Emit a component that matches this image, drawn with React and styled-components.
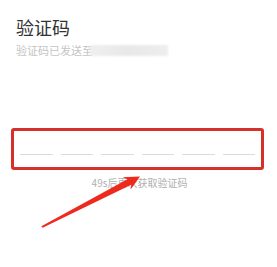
import React from "react";
import styled, { createGlobalStyle } from "styled-components";

const Global = createGlobalStyle`
  html, body { margin: 0; padding: 0; background: #fff; }
  body { font-family: "Noto Sans CJK SC", "Noto Sans", sans-serif; }
`;

const Page = styled.div`
  position: relative;
  width: 277px;
  height: 267px;
  overflow: hidden;
  background: #fff;
`;

const Header = styled.div`
  padding: 15px 0 0 16px;
  display: flex;
  flex-direction: column;
  gap: 3px;
`;

const Title = styled.div`
  font-size: 18px;
  line-height: 24px;
  color: #333;
`;

const Sub = styled.div`
  display: flex;
  align-items: center;
  font-size: 11px;
  line-height: 16px;
  color: #c4c4c4;
`;

const Masked = styled.span`
  display: inline-block;
  width: 78px;
  height: 11px;
  margin-left: -3px;
  background: linear-gradient(90deg, #efefef, #e8e8e8 50%, #eeeeee);
  filter: blur(0.8px);
`;

const Frame = styled.div`
  margin: 70px 13px 0 11px;
  border: 3px solid #d5302a;
  border-radius: 3px;
  padding: 23px 6px 12px 6px;
`;

const Dashes = styled.div`
  display: flex;
  gap: 8px;
`;

const Dash = styled.div`
  flex: 1;
  height: 1px;
  background: #dcdcdc;
`;

const Resend = styled.div`
  margin-top: 6px;
  text-align: center;
  padding-left: 2px;
  font-size: 10px;
  line-height: 14px;
  color: #b0b0b0;
`;

const ArrowLayer = styled.svg`
  position: absolute;
  left: 0;
  top: 0;
  pointer-events: none;
`;

export default function App() {
  return (
    <Page>
      <Global />
      <Header>
        <Title>验证码</Title>
        <Sub>
          验证码已发送至
          <Masked />
        </Sub>
      </Header>
      <Frame>
        <Dashes>
          {Array.from({ length: 6 }).map((_, i) => (
            <Dash key={i} />
          ))}
        </Dashes>
      </Frame>
      <Resend>49s后再次获取验证码</Resend>
      <ArrowLayer width="277" height="267" viewBox="0 0 277 267">
        <polygon
          points="41.4,226.2 127.4,179.2 122.6,177.2 140,176.6 130.6,189.6 131.2,184.8 42.6,227.8"
          fill="#ee2a1e"
        />
      </ArrowLayer>
    </Page>
  );
}
